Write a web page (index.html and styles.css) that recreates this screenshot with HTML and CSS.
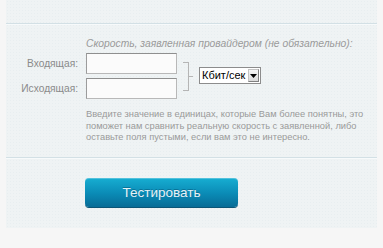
FILE: index.html
```html
<!DOCTYPE html>
<html>
<head>
<meta charset="utf-8">
<link rel="stylesheet" href="styles.css">
</head>
<body>
<div class="panel">
  <div class="rule"></div>
  <div class="form">
    <div class="caption">Скорость, заявленная провайдером (не обязательно):</div>
    <div class="speed">
      <div class="fields">
        <label class="lbl">Входящая:</label>
        <input class="inp" type="text">
        <label class="lbl">Исходящая:</label>
        <input class="inp" type="text">
      </div>
      <div class="bracket"></div>
      <div class="select"><span class="sel-text">Кбит/сек</span><span class="sel-btn"><svg width="7" height="4" viewBox="0 0 7 4"><path d="M0 0h7L3.5 4z" fill="#000"/></svg></span></div>
    </div>
    <p class="help">Введите значение в единицах, которые Вам более понятны, это поможет нам сравнить реальную скорость с заявленной, либо оставьте поля пустыми, если вам это не интересно.</p>
  </div>
  <div class="rule"></div>
  <div class="actions">
    <button class="btn">Тестировать</button>
  </div>
</div>
</body>
</html>
```

FILE: styles.css
```css
html, body {
  margin: 0;
  padding: 0;
  background: #f6f6f6;
  font-family: "Liberation Sans", Arial, sans-serif;
}
.panel {
  margin-left: 6px;
  width: 371px;
  height: 228px;
  padding-top: 23px;
  box-sizing: border-box;
  background-color: #eff3f4;
  background-image: radial-gradient(#e8eef0 0.6px, transparent 0.8px);
  background-size: 3px 3px;
}
.rule {
  height: 1px;
  border-top: 1px solid #d3e0e5;
  background: #f7fafb;
}
.form {
  height: 132px;
  box-sizing: border-box;
  padding-top: 12px;
}
.caption {
  margin-left: 80px;
  font-size: 10.3px;
  font-style: italic;
  color: #9a9a9a;
  line-height: 14px;
  height: 16px;
  white-space: nowrap;
}
.speed {
  display: flex;
  align-items: center;
}
.fields {
  display: grid;
  grid-template-columns: 72px 91px;
  column-gap: 8px;
  row-gap: 4px;
  align-items: center;
}
.lbl {
  text-align: right;
  font-size: 10.2px;
  color: #8a8a8a;
}
.inp {
  box-sizing: border-box;
  width: 91px;
  height: 21px;
  margin: 0;
  padding: 0;
  border: 1px solid #b8b8b8;
  border-top-color: #8f8f8f;
  border-left-color: #9c9c9c;
  background: #fbfbfb;
}
.bracket {
  position: relative;
  width: 6px;
  height: 29px;
  margin-left: 6px;
  border: 1px solid #b5b5b5;
  border-left: none;
  box-sizing: border-box;
}
.bracket::after {
  content: "";
  position: absolute;
  left: 5px;
  top: 13px;
  width: 5px;
  height: 1px;
  background: #b5b5b5;
}
.select {
  display: flex;
  align-items: center;
  margin-left: 10px;
  margin-top: -1px;
  height: 17px;
  width: 62px;
  box-sizing: border-box;
  border: 1px solid #8c8c8c;
  background: #fff;
}
.sel-text {
  flex: none;
  width: 46px;
  white-space: nowrap;
  font-size: 11px;
  color: #000;
  padding-left: 2px;
  line-height: 15px;
}
.sel-btn {
  width: 12px;
  height: 13px;
  margin-left: auto;
  margin-right: 1px;
  box-sizing: border-box;
  display: flex;
  align-items: center;
  justify-content: center;
  background: linear-gradient(#f6f6f6, #dadada);
  border: 1px solid #c4c4c4;
  border-right-color: #808080;
  border-bottom-color: #808080;
}
.help {
  margin: 10px 0 0 80px;
  width: 283px;
  font-size: 9.3px;
  line-height: 11.7px;
  color: #9a9a9a;
}
.actions {
  padding: 19px 0 0 79px;
}
.btn {
  display: block;
  width: 153px;
  height: 29px;
  margin: 0;
  padding: 0;
  border: none;
  border-radius: 4px;
  background: linear-gradient(#17aed2, #0a8ab5 55%, #086c96);
  box-shadow: inset 0 1px 0 rgba(255,255,255,0.25), 0 1px 0 #0b5577;
  color: #e6f2f7;
  font-family: "Liberation Sans", Arial, sans-serif;
  font-size: 13.5px;
  text-shadow: 0 -1px 0 rgba(0,60,90,0.4);
}
```
